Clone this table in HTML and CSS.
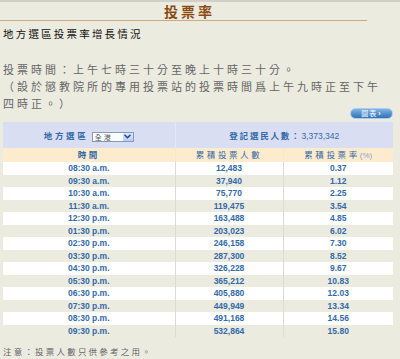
FILE: index.html
```html
<!DOCTYPE html>
<html lang="zh-Hant">
<head>
    <meta charset="UTF-8">
    <meta name="viewport" content="width=device-width, initial-scale=1.0">
    <title>投票率</title>
    <link rel="stylesheet" href="styles.css">
</head>
<body>
    <div class="page">
        <h1 class="title">投票率</h1>
        <p class="subtitle">地方選區投票率增長情況</p>
        <p class="hours">投票時間：上午七時三十分至晚上十時三十分。<br>（設於懲教院所的專用投票站的投票時間爲上午九時正至下午<br>四時正。）</p>

        <div class="toolbar">
            <a class="chart-btn" href="#chart">圖表<span class="arrow">›</span></a>
        </div>

        <table class="turnout">
            <colgroup>
                <col class="col-time">
                <col class="col-count">
                <col class="col-rate">
            </colgroup>
            <thead>
                <tr class="summary">
                    <th>
                        <span class="cjk">地方選區</span>
                        <span class="select"><span class="select-value">全港</span><span class="select-arrow"><svg width="7" height="5" viewBox="0 0 7 5"><path d="M0.5 0.8 L3.5 3.8 L6.5 0.8" fill="none" stroke="#1f3f8f" stroke-width="1.4"/></svg></span></span>
                    </th>
                    <th colspan="2"><span class="cjk voters">登記選民人數：</span>3,373,342</th>
                </tr>
                <tr class="labels">
                    <th><span class="cjk strong">時間</span></th>
                    <th><span class="cjk">累積投票人數</span></th>
                    <th><span class="cjk">累積投票率</span><span class="unit">(%)</span></th>
                </tr>
            </thead>
            <tbody>
                <tr><td>08:30 a.m.</td><td>12,483</td><td>0.37</td></tr>
                <tr><td>09:30 a.m.</td><td>37,940</td><td>1.12</td></tr>
                <tr><td>10:30 a.m.</td><td>75,770</td><td>2.25</td></tr>
                <tr><td>11:30 a.m.</td><td>119,475</td><td>3.54</td></tr>
                <tr><td>12:30 p.m.</td><td>163,488</td><td>4.85</td></tr>
                <tr><td>01:30 p.m.</td><td>203,023</td><td>6.02</td></tr>
                <tr><td>02:30 p.m.</td><td>246,158</td><td>7.30</td></tr>
                <tr><td>03:30 p.m.</td><td>287,300</td><td>8.52</td></tr>
                <tr><td>04:30 p.m.</td><td>326,228</td><td>9.67</td></tr>
                <tr><td>05:30 p.m.</td><td>365,212</td><td>10.83</td></tr>
                <tr><td>06:30 p.m.</td><td>405,880</td><td>12.03</td></tr>
                <tr><td>07:30 p.m.</td><td>449,949</td><td>13.34</td></tr>
                <tr><td>08:30 p.m.</td><td>491,168</td><td>14.56</td></tr>
                <tr><td>09:30 p.m.</td><td>532,864</td><td>15.80</td></tr>
            </tbody>
        </table>

        <p class="note">注意：投票人數只供參考之用。</p>
    </div>
</body>
</html>
```

FILE: styles.css
```css
* {
    margin: 0;
    padding: 0;
    box-sizing: border-box;
}

body {
    background-color: #ecebe0;
    font-family: "Liberation Sans", "Noto Sans CJK TC", sans-serif;
    color: #333;
    border-top: 2px solid #d2d1c8;
}

.page {
    width: 400px;
    padding: 0 0 0 3px;
}

.cjk {
    font-family: "Noto Sans CJK TC", sans-serif;
}

/* heading */
.title {
    width: 367px;
    height: 19px;
    margin-left: -3px;
    padding-left: 12px;
    border-bottom: 1px solid #c9ab82;
    text-align: center;
    font-family: "Noto Sans CJK TC", sans-serif;
    font-size: 14px;
    line-height: 18px;
    font-weight: 700;
    letter-spacing: 3px;
    color: #8a4b12;
}

.subtitle {
    margin-top: 6px;
    font-family: "Noto Sans CJK TC", sans-serif;
    font-size: 10.5px;
    line-height: 14px;
    letter-spacing: 2.2px;
    color: #111;
}

.hours {
    width: 396px;
    margin-top: 20px;
    font-family: "Noto Sans CJK TC", sans-serif;
    font-size: 11px;
    line-height: 17px;
    letter-spacing: 3px;
    color: #666;
    white-space: nowrap;
}

/* chart button */
.toolbar {
    display: flex;
    justify-content: flex-end;
    width: 390px;
    height: 11px;
    margin-top: -4px;
}

.chart-btn {
    display: flex;
    align-items: center;
    justify-content: center;
    width: 43px;
    height: 11px;
    border: 1px solid #a9cdec;
    border-radius: 6px;
    background: linear-gradient(#7fb4e6, #2f70b8);
    font-family: "Noto Sans CJK TC", sans-serif;
    font-size: 7px;
    line-height: 9px;
    letter-spacing: 1px;
    color: #fff;
    text-decoration: none;
}

.chart-btn .arrow {
    margin-left: 1px;
    font-family: "Liberation Sans", sans-serif;
    font-weight: 700;
}

/* table */
.turnout {
    width: 390px;
    margin-top: 3px;
    border-collapse: collapse;
    table-layout: fixed;
    color: #336aa8;
}

.col-time {
    width: 172px;
}

.col-count {
    width: 108px;
}

.col-rate {
    width: 110px;
}

.turnout th,
.turnout td {
    text-align: center;
    padding: 0;
    white-space: nowrap;
}

.turnout td + td,
.turnout th + th {
    border-left: 1px solid #dcdcd4;
}

.summary th {
    height: 26px;
    background-color: #d9def2;
    font-size: 8.5px;
    font-weight: 400;
    letter-spacing: 0;
}

.summary .cjk {
    font-size: 8.5px;
    font-weight: 700;
    letter-spacing: 2.6px;
}

.summary .voters {
    letter-spacing: 1.8px;
}

.summary th + th {
    border-left-color: #e6e8f4;
}

.select {
    display: inline-flex;
    vertical-align: -1px;
    width: 42px;
    height: 10px;
    margin-left: 1px;
    border: 1px solid #7f9db9;
    background: #fff;
}

.select-value {
    flex: 1;
    padding-left: 2px;
    text-align: left;
    font-family: "Noto Sans CJK TC", sans-serif;
    font-size: 7px;
    line-height: 8px;
    letter-spacing: 2px;
    color: #555;
}

.select-arrow {
    display: flex;
    align-items: center;
    justify-content: center;
    width: 10px;
    background: linear-gradient(#dfe9fb, #b7cdf4);
}

.labels th {
    height: 12px;
    background-color: #fdebcd;
    font-size: 8px;
    font-weight: 400;
    line-height: 12px;
}

.labels .cjk {
    font-size: 8.5px;
    letter-spacing: 2.6px;
}

.labels .strong {
    font-weight: 700;
}

.labels th + th {
    border-left-color: #f3e6d2;
}

.labels .unit {
    font-size: 8px;
    color: #8aa6c8;
}

.turnout td {
    height: 12.5px;
    font-size: 8.5px;
    font-weight: 700;
    line-height: 12px;
}

.turnout tbody tr:nth-child(odd) {
    background-color: #fff;
}

.turnout tbody tr:nth-child(even) {
    background-color: #ecebe0;
}

.note {
    margin-top: 8px;
    font-family: "Noto Sans CJK TC", sans-serif;
    font-size: 8.5px;
    line-height: 12px;
    letter-spacing: 2.2px;
    color: #666;
}
```
